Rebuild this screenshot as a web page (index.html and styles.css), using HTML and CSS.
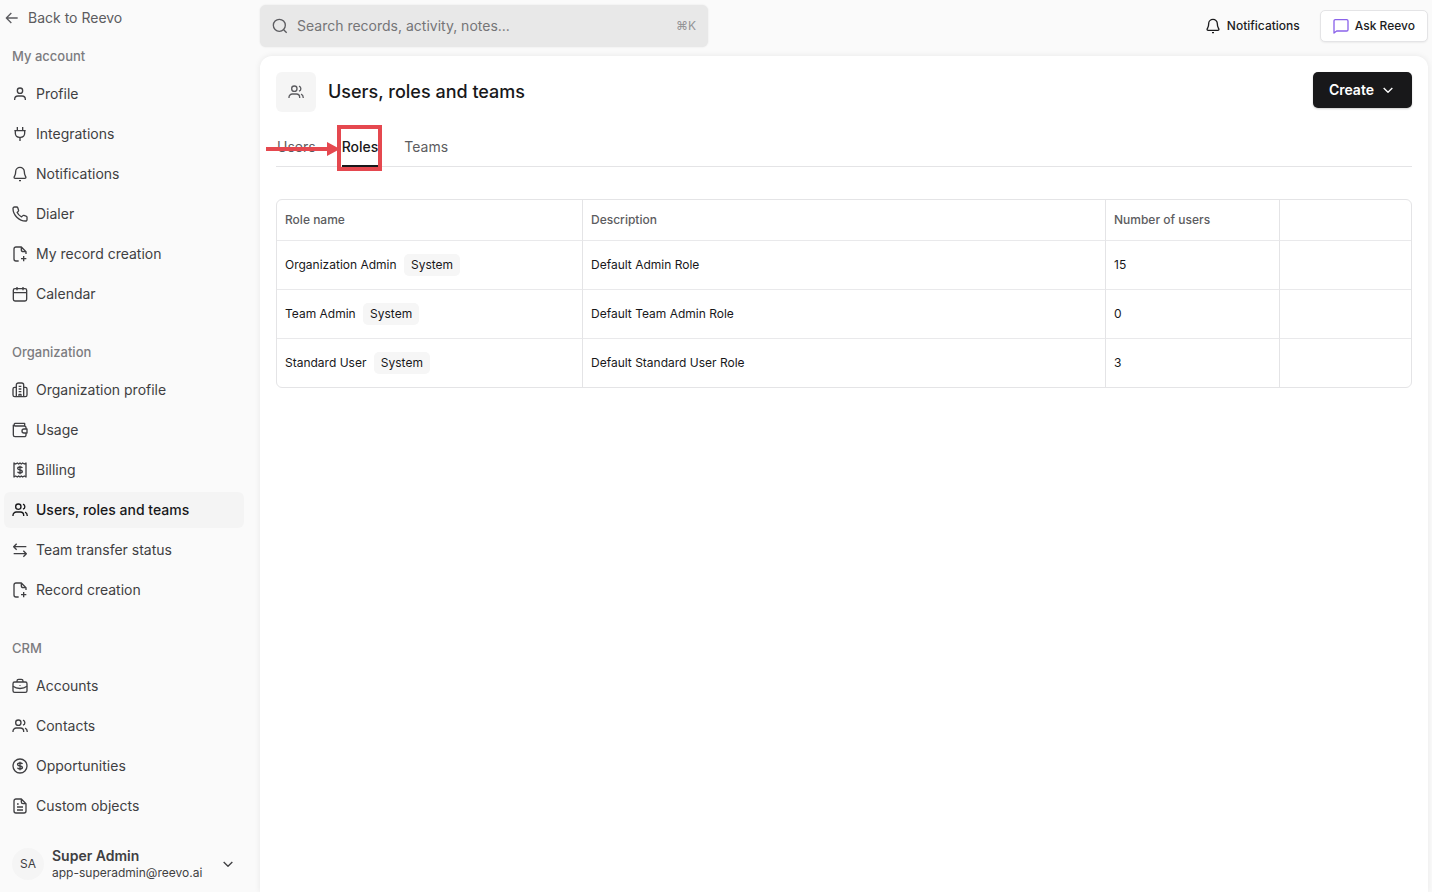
FILE: index.html
```html
<!DOCTYPE html>
<html lang="en">
<head>
    <meta charset="UTF-8">
    <meta name="viewport" content="width=device-width, initial-scale=1.0">
    <title>Users, roles and teams</title>
    <link rel="stylesheet" href="styles.css">
</head>
<body>
    <!-- Icons used more than once -->
    <svg class="sprite" aria-hidden="true">
        <symbol id="icon-users" viewBox="0 0 24 24">
            <circle cx="9.5" cy="7" r="4"/>
            <path d="M1.500 21v-1a5 5 0 0 1 5-5h6a5 5 0 0 1 5 5v1M16.500 3.200c1.800.7 2.800 2 2.800 3.800s-1 3.100-2.800 3.800M19.500 15.300c1.900.7 3.300 2.200 3.300 4.700v1"/>
        </symbol>
        <symbol id="icon-bell" viewBox="0 0 24 24">
            <path d="M12 2a6.500 6.500 0 0 0-6.500 6.500c0 3-.6 5-1.600 6.700-.9 1.500-1.400 3.300.6 3.300h15c2 0 1.500-1.800.6-3.300-1-1.700-1.600-3.700-1.600-6.700A6.500 6.500 0 0 0 12 2zM10.500 22h3"/>
        </symbol>
        <symbol id="icon-file-plus" viewBox="0 0 24 24">
            <path d="M10 22.500H6a3 3 0 0 1-3-3V4.500a3 3 0 0 1 3-3h8l7 7V12M14 1.500v4a3 3 0 0 0 3 3h4M17.500 15v8M13.500 19h8"/>
        </symbol>
        <symbol id="icon-chevron" viewBox="0 0 24 24">
            <path d="M5.500 9l6.500 6.500L18.500 9"/>
        </symbol>
    </svg>

    <div class="app">
        <aside class="sidebar">
            <a href="#" class="back-link">
                <svg class="icon" viewBox="0 0 24 24"><path d="M20.500 12H4M11 4.500L3.500 12l7.500 7.500"/></svg>
                Back to Reevo
            </a>

            <nav class="nav-group">
                <h2>My account</h2>
                <a href="#" class="nav-item">
                    <svg class="icon" viewBox="0 0 24 24"><circle cx="12" cy="7" r="4"/><path d="M4 21v-1a5 5 0 0 1 5-5h6a5 5 0 0 1 5 5v1"/></svg>
                    Profile
                </a>
                <a href="#" class="nav-item">
                    <svg class="icon" viewBox="0 0 24 24"><path d="M8 1.500V7M16 1.500V7M5 7h14v4a6 6 0 0 1-6 6h-2a6 6 0 0 1-6-6zM12 17v5.500M3.500 7h17"/></svg>
                    Integrations
                </a>
                <a href="#" class="nav-item">
                    <svg class="icon"><use href="#icon-bell"/></svg>
                    Notifications
                </a>
                <a href="#" class="nav-item">
                    <svg class="icon" viewBox="0 0 24 24"><path d="M22.500 17.500v3a2 2 0 0 1-2.200 2C10.500 22.500 1.500 13.500 1.500 3.700a2.200 2.200 0 0 1 2.200-2.200h3.200a2 2 0 0 1 1.900 1.400l1 3.300a2 2 0 0 1-.6 2L7.700 9.700a15.500 15.500 0 0 0 6.600 6.600l1.500-1.500a2 2 0 0 1 2-.6l3.300 1a2 2 0 0 1 1.400 2.300z"/></svg>
                    Dialer
                </a>
                <a href="#" class="nav-item">
                    <svg class="icon"><use href="#icon-file-plus"/></svg>
                    My record creation
                </a>
                <a href="#" class="nav-item">
                    <svg class="icon" viewBox="0 0 24 24"><rect x="2" y="4" width="20" height="18.500" rx="2.500"/><path d="M2 10h20M7.500 1.500v5M16.500 1.500v5"/></svg>
                    Calendar
                </a>
            </nav>

            <nav class="nav-group">
                <h2>Organization</h2>
                <a href="#" class="nav-item">
                    <svg class="icon" viewBox="0 0 24 24"><path d="M6.500 22V4.500a3 3 0 0 1 3-3h5a3 3 0 0 1 3 3V22M6.500 8H4a2.500 2.500 0 0 0-2.500 2.500v9A2.500 2.500 0 0 0 4 22h16a2.500 2.500 0 0 0 2.500-2.500v-9A2.500 2.500 0 0 0 20 8h-2.500M10 6.500h4M10 10.500h4M10 14.500h4M10.500 22v-3.500h3V22"/></svg>
                    Organization profile
                </a>
                <a href="#" class="nav-item">
                    <svg class="icon" viewBox="0 0 24 24"><path d="M21 9.500V8.500A2.500 2.500 0 0 0 18.500 6H4.500a2.200 2.200 0 0 1 0-4H19v4M2 4v15.500A2.500 2.500 0 0 0 4.500 22h14a2.500 2.500 0 0 0 2.500-2.500v-2.500M22.500 10.500v6H18a3 3 0 0 1 0-6z"/></svg>
                    Usage
                </a>
                <a href="#" class="nav-item">
                    <svg class="icon" viewBox="0 0 24 24"><path d="M3 1.500l2.500 1.500L8 1.500 10 3l2-1.500L14 3l2-1.500L18.500 3 21 1.500v21L18.500 21 16 22.500 14 21l-2 1.500L10 21l-2 1.500L5.500 21 3 22.500zM12 5.500v13M15.500 9c-.5-1-1.500-1.500-3.500-1.500-2.200 0-3.500.8-3.500 2.200 0 3.300 7 1.300 7 4.600 0 1.500-1.400 2.200-3.500 2.200s-3.200-.6-3.700-1.800"/></svg>
                    Billing
                </a>
                <a href="#" class="nav-item active">
                    <svg class="icon"><use href="#icon-users"/></svg>
                    Users, roles and teams
                </a>
                <a href="#" class="nav-item">
                    <svg class="icon" viewBox="0 0 24 24"><path d="M21.500 7H3M7 2.500L2.500 7 7 11.500M2.500 17.500H21M17 13l4.500 4.500L17 22"/></svg>
                    Team transfer status
                </a>
                <a href="#" class="nav-item">
                    <svg class="icon"><use href="#icon-file-plus"/></svg>
                    Record creation
                </a>
            </nav>

            <nav class="nav-group">
                <h2>CRM</h2>
                <a href="#" class="nav-item">
                    <svg class="icon" viewBox="0 0 24 24"><rect x="1.500" y="6" width="21" height="15.500" rx="2.500"/><path d="M7.500 6V4.500A2.500 2.500 0 0 1 10 2h4a2.500 2.500 0 0 1 2.500 2.500V6M1.500 12.500c3 2.200 6.500 3.200 10.500 3.200s7.500-1 10.500-3.200M12 11v1"/></svg>
                    Accounts
                </a>
                <a href="#" class="nav-item">
                    <svg class="icon"><use href="#icon-users"/></svg>
                    Contacts
                </a>
                <a href="#" class="nav-item">
                    <svg class="icon" viewBox="0 0 24 24"><circle cx="12" cy="12" r="10.500"/><path d="M12 5.500v13M15.700 9c-.5-1-1.700-1.500-3.700-1.500-2.200 0-3.700.8-3.700 2.200 0 3.300 7.400 1.300 7.400 4.600 0 1.500-1.500 2.200-3.700 2.200s-3.300-.6-3.900-1.800"/></svg>
                    Opportunities
                </a>
                <a href="#" class="nav-item">
                    <svg class="icon" viewBox="0 0 24 24"><path d="M14 1.500H6a3 3 0 0 0-3 3v15a3 3 0 0 0 3 3h12a3 3 0 0 0 3-3v-11zM14 1.500V6a2.500 2.500 0 0 0 2.500 2.500H21M7.500 9H10M7.500 13.500h9M7.500 18h9"/></svg>
                    Custom objects
                </a>
            </nav>

            <button type="button" class="account">
                <span class="avatar">SA</span>
                <span class="account-text">
                    <strong>Super Admin</strong>
                    <span>app-superadmin@reevo.ai</span>
                </span>
                <svg class="icon"><use href="#icon-chevron"/></svg>
            </button>
        </aside>

        <div class="content">
            <header class="topbar">
                <label class="search">
                    <svg class="icon" viewBox="0 0 24 24"><circle cx="11" cy="11" r="9"/><path d="M17.500 17.500l4.500 4.500"/></svg>
                    <input type="text" placeholder="Search records, activity, notes..." aria-label="Search">
                    <kbd>⌘K</kbd>
                </label>
                <div class="topbar-actions">
                    <button type="button" class="notifications">
                        <svg class="icon"><use href="#icon-bell"/></svg>
                        Notifications
                    </button>
                    <button type="button" class="ask">
                        <svg class="icon" viewBox="0 0 24 24"><path d="M1.500 22.500v-18a2 2 0 0 1 2-2h17a2 2 0 0 1 2 2v13a2 2 0 0 1-2 2h-15z"/></svg>
                        Ask Reevo
                    </button>
                </div>
            </header>

            <main class="panel">
                <div class="page-header">
                    <span class="page-icon"><svg class="icon"><use href="#icon-users"/></svg></span>
                    <h1>Users, roles and teams</h1>
                    <button type="button" class="create">
                        Create
                        <svg class="icon"><use href="#icon-chevron"/></svg>
                    </button>
                </div>

                <div class="tabs">
                    <a href="#" class="tab">Users</a>
                    <a href="#" class="tab active">
                        Roles
                        <span class="highlight"></span>
                        <svg class="arrow" viewBox="0 0 74 14" aria-hidden="true"><path d="M0 5h61V0l13 7-13 7V9H0z"/></svg>
                    </a>
                    <a href="#" class="tab">Teams</a>
                </div>

                <div class="table-wrap">
                    <table>
                        <thead>
                            <tr>
                                <th class="col-name">Role name</th>
                                <th>Description</th>
                                <th class="col-count">Number of users</th>
                                <th class="col-actions"></th>
                            </tr>
                        </thead>
                        <tbody>
                            <tr>
                                <td>Organization Admin <span class="badge">System</span></td>
                                <td>Default Admin Role</td>
                                <td>15</td>
                                <td></td>
                            </tr>
                            <tr>
                                <td>Team Admin <span class="badge">System</span></td>
                                <td>Default Team Admin Role</td>
                                <td>0</td>
                                <td></td>
                            </tr>
                            <tr>
                                <td>Standard User <span class="badge">System</span></td>
                                <td>Default Standard User Role</td>
                                <td>3</td>
                                <td></td>
                            </tr>
                        </tbody>
                    </table>
                </div>
            </main>
        </div>
    </div>
</body>
</html>
```

FILE: styles.css
```css
* {
    box-sizing: border-box;
}

body {
    margin: 0;
    font-family: Inter, "Liberation Sans", sans-serif;
    font-size: 14px;
    line-height: 20px;
    color: #3f3f42;
    background-color: #fafafa;
}

a {
    color: inherit;
    text-decoration: none;
}

button {
    font: inherit;
    color: inherit;
    background: none;
    border: none;
    padding: 0;
    cursor: pointer;
}

.sprite {
    display: none;
}

.icon {
    flex: none;
    width: 16px;
    height: 16px;
    fill: none;
    stroke: currentColor;
    stroke-width: 2;
    stroke-linejoin: round;
}

.app {
    display: flex;
    min-height: 100vh;
}

/* Sidebar */
.sidebar {
    flex: none;
    display: flex;
    flex-direction: column;
    width: 248px;
    padding: 0 4px;
}

.back-link {
    display: flex;
    align-items: center;
    gap: 8px;
    height: 36px;
    color: #5c5c60;
}

.nav-group {
    display: flex;
    flex-direction: column;
    gap: 4px;
    margin-top: 10px;
}

.nav-group + .nav-group {
    margin-top: 30px;
}

.nav-group h2 {
    margin: 0 0 6px;
    padding: 0 8px;
    font-size: 13px;
    font-weight: 500;
    color: #7c7c80;
}

.nav-item {
    display: flex;
    align-items: center;
    gap: 8px;
    height: 36px;
    padding: 0 8px;
    border-radius: 6px;
}

.nav-item.active {
    background-color: #f4f4f4;
    color: #18181a;
    font-weight: 500;
}

.account {
    display: flex;
    align-items: center;
    gap: 8px;
    margin: 16px 0 4px;
    padding: 0 8px;
    height: 48px;
    text-align: left;
}

.avatar {
    flex: none;
    width: 32px;
    height: 32px;
    border-radius: 50%;
    background-color: #f5f5f5;
    font-size: 12px;
    line-height: 32px;
    text-align: center;
}

.account-text {
    flex: 1;
    display: flex;
    flex-direction: column;
    gap: 1px;
    font-size: 12px;
    line-height: 16px;
}

.account-text strong {
    font-size: 14px;
    font-weight: 600;
}

/* Top bar */
.content {
    flex: 1;
    display: flex;
    flex-direction: column;
    min-width: 0;
    padding: 0 4px 0 12px;
}

.topbar {
    display: flex;
    align-items: center;
    justify-content: space-between;
    height: 52px;
    margin-bottom: 4px;
}

.search {
    display: flex;
    align-items: center;
    gap: 9px;
    width: 448px;
    height: 42px;
    padding: 0 12px;
    border-radius: 6px;
    background-color: #e8e8e8;
    box-shadow: 0 0 2px rgba(0, 0, 0, 0.1);
    color: #5c5c60;
}

.search input {
    flex: 1;
    min-width: 0;
    padding: 0;
    border: none;
    outline: none;
    background: none;
    font: inherit;
}

.search input::placeholder {
    color: #757577;
    opacity: 1;
}

.search kbd {
    font-family: inherit;
    font-size: 12px;
    color: #949496;
}

.topbar-actions {
    display: flex;
    align-items: center;
    gap: 20px;
    font-size: 12px;
    font-weight: 500;
    color: #1c1c1e;
}

.notifications,
.ask {
    display: flex;
    align-items: center;
    gap: 6px;
    height: 32px;
}

.ask {
    padding: 0 12px;
    border: 1px solid #e4e4e6;
    border-radius: 5px;
    background-color: white;
    box-shadow: 0 1px 2px rgba(0, 0, 0, 0.06);
}

.ask .icon {
    stroke: #8b63ea;
}

/* Main panel */
.panel {
    flex: 1;
    padding: 16px;
    border-radius: 12px 12px 0 0;
    background-color: white;
    box-shadow: 0 0 6px rgba(0, 0, 0, 0.08);
}

.page-header {
    display: flex;
    align-items: center;
    gap: 12px;
    height: 40px;
}

.page-icon {
    display: flex;
    align-items: center;
    justify-content: center;
    width: 40px;
    height: 40px;
    border-radius: 6px;
    background-color: #f5f5f5;
    color: #5c5c60;
}

h1 {
    flex: 1;
    margin: 0;
    font-size: 18px;
    font-weight: 500;
    line-height: 24px;
    color: #18181a;
}

.create {
    display: flex;
    align-items: center;
    align-self: flex-start;
    gap: 6px;
    height: 36px;
    padding: 0 16px;
    border-radius: 5px;
    background-color: #18181a;
    box-shadow: 0 1px 2px rgba(0, 0, 0, 0.2);
    color: white;
    font-weight: 600;
}

.tabs {
    display: flex;
    gap: 26px;
    margin-top: 16px;
    padding: 0 1px;
    border-bottom: 1px solid #e4e4e6;
    color: #5c5c60;
}

.tab {
    position: relative;
    height: 39px;
    margin-bottom: -1px;
    line-height: 38px;
}

.tab.active {
    border-bottom: 2px solid #18181a;
    color: #18181a;
    font-weight: 500;
}

/* Callout around the active tab */
.highlight {
    position: absolute;
    top: -3px;
    right: -4px;
    bottom: -6px;
    left: -5px;
    border: 4px solid #e5484f;
}

.arrow {
    position: absolute;
    top: 14px;
    right: calc(100% + 2px);
    width: 74px;
    height: 14px;
    fill: #e5484f;
}

/* Roles table */
.table-wrap {
    margin-top: 32px;
    border: 1px solid #e4e4e6;
    border-radius: 6px;
    overflow: hidden;
}

table {
    width: 100%;
    border-collapse: separate;
    border-spacing: 0;
    table-layout: fixed;
    font-size: 12px;
    color: #18181a;
}

th,
td {
    padding: 0 8px;
    border-bottom: 1px solid #e9e9eb;
    text-align: left;
}

th {
    height: 41px;
    font-weight: 500;
    color: #5c5c60;
}

td {
    height: 49px;
}

tbody tr:last-child td {
    height: 48px;
    border-bottom: none;
}

th + th,
td + td {
    border-left: 1px solid #e4e4e6;
}

.col-name {
    width: 305px;
}

.col-count {
    width: 174px;
}

.col-actions {
    width: 132px;
}

.badge {
    display: inline-block;
    margin-left: 4px;
    padding: 1px 7px;
    border-radius: 5px;
    background-color: #f6f6f6;
}
```
